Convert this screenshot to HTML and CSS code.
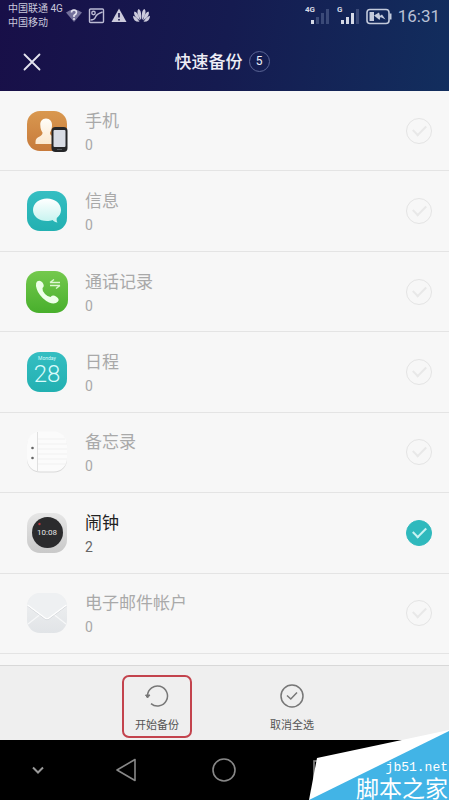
FILE: index.html
```html
<!DOCTYPE html>
<html lang="zh-CN">
<head>
<meta charset="utf-8">
<meta name="viewport" content="width=device-width, initial-scale=1">
<title>快速备份</title>
<link rel="stylesheet" href="styles.css">
</head>
<body>
<header class="top">
  <div class="status">
    <div class="carriers"><span>中国联通 4G</span><span>中国移动</span></div>
    <svg class="notices" width="84" height="18" viewBox="0 0 84 18" aria-hidden="true">
      <path d="M0 5.500Q8-0.500 16 5.500L8 15Z" fill="#74719b"/>
      <path d="M5.500 5.500Q5.500 3 8 3T10.500 5.500Q10.500 7 8 8.500V10" fill="none" stroke="#e6e5f0" stroke-width="1.600"/><circle cx="8" cy="12" r="1" fill="#e6e5f0"/>
      <g fill="none" stroke="#bcbbd4" stroke-width="1.400"><rect x="23.500" y="2" width="14" height="13.500" rx="1"/><circle cx="27.500" cy="6" r="1.700"/><path d="M24.500 13Q28.500 13 29.500 10T36.500 5"/></g>
      <path d="M53 1.500L60.500 15H45.500Z" fill="#cccbdc"/><path d="M53 6v4.500M53 12v1.600" stroke="#18144a" stroke-width="1.600"/>
      <g fill="#cccbdc"><path d="M75 13Q69.500 5 72.500 2Q76 3 75 13ZM76 13Q75 3 78.500 2Q81.500 5 76 13ZM74 13.500Q66.500 8.500 68.500 4.500Q72 5 74 13.500ZM77 13.500Q79 5 82.500 4.500Q84.500 8.500 77 13.500ZM73.500 14.800Q67 15 67 8.800Q70.500 10 73.500 14.800ZM77.500 14.800Q80.500 10 84 8.800Q84 15 77.500 14.800Z"/></g>
    </svg>
    <svg class="signals" width="88" height="22" viewBox="0 0 88 22" aria-hidden="true">
      <g fill="#d5d9e6" font-family="Roboto, sans-serif" font-size="8" font-weight="700"><text x="0" y="8">4G</text><text x="32" y="8">G</text></g>
      <g fill="#d5d9e6"><path d="M6 16h3v4H6zM36 16h3v4h-3zM41 13h3v7h-3zM46 9h3v11h-3z"/></g>
      <path d="M11 13h3v7h-3zM16 9h3v11h-3zM21 5h3v15h-3zM51 5h3v15h-3z" fill="#3b4a78"/>
      <rect x="62" y="5.500" width="22" height="14" rx="3" fill="none" stroke="#c3cadb" stroke-width="1.600"/><path d="M84.500 9.500h2v6h-2z" fill="#c3cadb"/>
      <path d="M64.500 8h4.500v9h-4.500zM69 11.500l5-3 1 3.200 2-1.200 3.500 5-5-2.500-1 3z" fill="#c3cadb"/>
    </svg>
    <time class="clock">16:31</time>
  </div>
  <div class="titlebar">
    <button class="close" type="button" aria-label="关闭"><svg width="18" height="18" viewBox="0 0 18 18"><path d="M1.500 1.500l15 15M16.500 1.500l-15 15" stroke="#e4e4ef" stroke-width="1.800" stroke-linecap="round"/></svg></button>
    <div class="heading"><h1>快速备份</h1><span class="badge">5</span></div>
  </div>
</header>
<main class="list">
  <label class="row">
    <svg class="icon" viewBox="0 0 42 42" aria-hidden="true"><defs><linearGradient id="or" x2="0" y2="1"><stop stop-color="#d9984f"/><stop offset="1" stop-color="#c77a3b"/></linearGradient><linearGradient id="cream" x2="0" y2="1"><stop stop-color="#fffdf8"/><stop offset="1" stop-color="#fbe8d0"/></linearGradient></defs>
      <rect x="1" y="1" width="40" height="40" rx="13" fill="url(#or)"/>
      <path d="M20 8.500C16 8.500 14 11.500 14.300 15C14.300 19 15.500 21 16.500 22.500C17 27 9.500 26 9.500 32V34H32V27C27 26 23.500 26 24 22.500C25.500 20 26 18 26 15C26 11.500 24 8.500 20 8.500Z" fill="url(#cream)"/>
      <rect x="25.500" y="17" width="16" height="25" rx="4" fill="#252628"/><rect x="27.500" y="20" width="12" height="17" rx="1" fill="#d8dce4"/><path d="M31 39.500h5" stroke="#55585b"/></svg>
    <span class="text"><span class="name">手机</span><span class="count">0</span></span>
    <input type="checkbox">
  </label>
  <label class="row">
    <svg class="icon" viewBox="0 0 42 42" aria-hidden="true"><defs><linearGradient id="te" x2="0" y2="1"><stop stop-color="#35bec2"/><stop offset="1" stop-color="#22b0b1"/></linearGradient><linearGradient id="bub" x2="0" y2="1"><stop stop-color="#fff"/><stop offset="1" stop-color="#c5f3ef"/></linearGradient></defs>
      <rect x="1" y="1" width="40" height="40" rx="13" fill="url(#te)"/>
      <path d="M21 8.500C13 8.500 7 13.500 7 20S13 31 21 31C23 31 25 30.700 26.500 30C28 31.500 29.500 32.500 31.500 32.500C30.500 31 30.500 29.500 30.800 28C33.500 26 35 23 35 20C35 13.500 29 8.500 21 8.500Z" fill="url(#bub)"/></svg>
    <span class="text"><span class="name">信息</span><span class="count">0</span></span>
    <input type="checkbox">
  </label>
  <label class="row">
    <svg class="icon" viewBox="0 0 42 42" aria-hidden="true"><defs><linearGradient id="gr" x2="0" y2="1"><stop stop-color="#74c94d"/><stop offset="1" stop-color="#48af2c"/></linearGradient></defs>
      <rect width="42" height="42" rx="13" fill="url(#gr)"/>
      <path d="M11 10.500Q14 8.500 16.500 11.500Q19 15 16.500 17Q16 20 19 23Q22 26 24.500 26Q27 23.500 30 25.500Q34 28 32 30.500Q29 34 23 31.500Q16 28 12 21Q8.500 13.500 11 10.500Z" fill="#edffe8"/>
      <path d="M24 11.500h10M24 11.500l4-3M24 14.500h10M34 14.500l-4 3" fill="none" stroke="#ddf7d3" stroke-width="1.400"/></svg>
    <span class="text"><span class="name">通话记录</span><span class="count">0</span></span>
    <input type="checkbox">
  </label>
  <label class="row">
    <svg class="icon" viewBox="0 0 42 42" aria-hidden="true"><rect x="1" y="1" width="40" height="40" rx="13" fill="url(#te)"/>
      <g fill="#d9fbfb" text-anchor="middle" font-family="Roboto, sans-serif"><text x="21" y="9" font-size="5">Monday</text><text x="21" y="31" font-size="24" font-weight="300">28</text></g></svg>
    <span class="text"><span class="name">日程</span><span class="count">0</span></span>
    <input type="checkbox">
  </label>
  <label class="row">
    <svg class="icon" viewBox="0 0 42 42" aria-hidden="true"><rect x="1" y="1.500" width="40" height="40" rx="13" fill="#d9d9d9"/><rect x="1" y="0.500" width="40" height="40" rx="13" fill="#fbfbfb"/>
      <path d="M12 8h27M12 13h29M12 18h29M12 23h29M12 28h29M12 33h28" stroke="#f1f1f1"/><path d="M11.500 1v39" stroke="#e0e0e0"/><circle cx="6.500" cy="17" r="1.300" fill="#666"/><circle cx="6.500" cy="27" r="1.300" fill="#666"/></svg>
    <span class="text"><span class="name">备忘录</span><span class="count">0</span></span>
    <input type="checkbox">
  </label>
  <label class="row selected">
    <svg class="icon" viewBox="0 0 42 42" aria-hidden="true"><defs><linearGradient id="si" x2="0" y2="1"><stop stop-color="#e6e6e6"/><stop offset="1" stop-color="#c9c9c9"/></linearGradient></defs>
      <rect x="1" y="1" width="40" height="40" rx="13" fill="url(#si)"/><circle cx="21.500" cy="20.500" r="15.500" fill="#2b2b2d"/><circle cx="13.500" cy="12" r="1.200" fill="#b5343c"/>
      <text x="21" y="23" font-size="8" text-anchor="middle" fill="#e6e6e6" font-family="Roboto, sans-serif">10:08</text></svg>
    <span class="text"><span class="name">闹钟</span><span class="count">2</span></span>
    <input type="checkbox" checked>
  </label>
  <label class="row">
    <svg class="icon" viewBox="0 0 42 42" aria-hidden="true"><defs><linearGradient id="ma" x2="0" y2="1"><stop stop-color="#f0f1f2"/><stop offset="1" stop-color="#e1e4e7"/></linearGradient></defs>
      <rect x="1" y="1" width="40" height="40" rx="13" fill="url(#ma)"/><path d="M2 32L16 21M40 32L26 21" stroke="#f7f8f9" stroke-width="1.200"/><path d="M1.500 13L19 26Q21 27.500 23 26L40.500 13Q38 1 28 1H14Q4 1 1.500 13Z" fill="#eef0f2"/><path d="M1.500 14L19 27Q21 28.500 23 27L40.500 14" fill="none" stroke="#d3d6da"/><path d="M1.500 13L19 26Q21 27.500 23 26L40.500 13" fill="none" stroke="#fff" stroke-width="1.200"/></svg>
    <span class="text"><span class="name">电子邮件帐户</span><span class="count">0</span></span>
    <input type="checkbox">
  </label>
</main>
<footer class="actions">
  <button class="action marked" type="button">
    <svg width="24" height="24" viewBox="0 0 24 24" fill="none" stroke="#777" stroke-width="1.500"><path d="M2.500 11.500A10 10 0 1 1 6 19.600"/><path d="M0.500 11h4.500L2.500 14Z" fill="#777" stroke-width="1"/></svg>
    开始备份</button>
  <button class="action" type="button">
    <svg width="24" height="24" viewBox="0 0 24 24" fill="none" stroke="#777" stroke-width="1.500"><circle cx="12" cy="12" r="11"/><path d="M7 11.500l3.800 3.500L17 8.500"/></svg>
    取消全选</button>
</footer>
<nav class="keys">
  <button type="button" aria-label="收起"><svg width="12" height="8" viewBox="0 0 12 8"><path d="M1 1.500l5 5 5-5" fill="none" stroke="#999" stroke-width="2"/></svg></button>
  <button type="button" aria-label="返回"><svg width="22" height="24" viewBox="0 0 22 24"><path d="M20 1.500v21L2 12Z" fill="none" stroke="#888" stroke-width="1.600" stroke-linejoin="round"/></svg></button>
  <button type="button" aria-label="主屏幕"><svg width="24" height="24" viewBox="0 0 24 24"><circle cx="12" cy="12" r="11" fill="none" stroke="#888" stroke-width="1.600"/></svg></button>
  <button type="button" aria-label="最近任务"><svg width="20" height="20" viewBox="0 0 20 20"><rect x="1" y="1" width="18" height="18" fill="none" stroke="#888" stroke-width="1.600"/></svg></button>
</nav>
<aside class="watermark">
  <svg width="140" height="70" viewBox="0 0 140 70" aria-hidden="true"><path d="M0 70L8 28L140 0V70Z" fill="#fff"/><path d="M0 70L140 1V70Z" fill="#42b4e6"/></svg>
  <div class="site"><span class="domain">jb51.net</span><span class="brand">脚本之家</span></div>
</aside>
</body>
</html>
```
FILE: styles.css
```css
* {
  box-sizing: border-box;
}

body {
  position: relative;
  display: flex;
  flex-direction: column;
  min-height: 100vh;
  margin: 0;
  background: #f7f7f7;
  font-family: Roboto, "Noto Sans CJK SC", sans-serif;
}

button {
  padding: 0;
  border: 0;
  background: none;
  font: inherit;
  cursor: pointer;
}

svg {
  display: block;
  flex: none;
}

.top {
  height: 91px;
  background: linear-gradient(100deg, #180f48, #151b50 50%, #122e5e);
  color: #eeeef6;
}

.status {
  display: flex;
  align-items: center;
  height: 31px;
  padding: 0 9px 0 8px;
}

.carriers {
  display: flex;
  flex-direction: column;
  width: 58px;
  color: #c9c8dc;
  font-size: 10px;
  line-height: 14px;
  white-space: nowrap;
}

.signals {
  margin-left: auto;
  margin-bottom: 2px;
}

.clock {
  margin-left: 5px;
  color: #b9c1d5;
  font-size: 17px;
}

.titlebar {
  display: grid;
  grid-template-columns: 1fr auto 1fr;
  align-items: center;
  height: 61px;
  padding-right: 5px;
}

.close {
  justify-self: start;
  padding: 12px 23px;
}

.heading {
  display: flex;
  align-items: center;
  gap: 6px;
}

h1 {
  margin: 0;
  font-size: 17px;
  font-weight: 500;
  line-height: 24px;
}

.badge {
  width: 21px;
  height: 21px;
  border: 1px solid #5b6595;
  border-radius: 50%;
  font-size: 12px;
  line-height: 19px;
  text-align: center;
}

.list {
  display: grid;
  flex: 1;
  grid-auto-rows: 1fr;
  padding-bottom: 11px;
}

.row {
  display: flex;
  align-items: center;
  padding: 0 17px 0 26px;
  border-bottom: 1px solid #e4e4e4;
}

.icon {
  width: 42px;
  height: 42px;
}

.text {
  display: flex;
  flex: 1;
  flex-direction: column;
  margin-left: 17px;
  padding-top: 4px;
  color: #a9a9a9;
  line-height: 24px;
}

.name {
  font-size: 17px;
}

.count {
  font-size: 14px;
}

.selected .name {
  color: #222;
}

.selected .count {
  color: #666;
}

.row input {
  display: grid;
  place-items: center;
  width: 26px;
  height: 26px;
  margin: 0;
  border: 1px solid #e4e4e4;
  border-radius: 50%;
  appearance: none;
}

.row input::after {
  width: 11px;
  height: 6px;
  margin-bottom: 4px;
  border: solid #e8e8e8;
  border-width: 0 0 2px 2px;
  content: "";
  transform: rotate(-45deg);
}

.row input:checked {
  border-color: #2fb9bd;
  background: #2fb9bd;
}

.row input:checked::after {
  border-color: #c8f3f2;
}

.actions {
  display: flex;
  justify-content: center;
  gap: 65px;
  height: 75px;
  padding-top: 9px;
  border-top: 1px solid #d8d8d8;
  background: #efefef;
}

.action {
  display: flex;
  flex-direction: column;
  align-items: center;
  gap: 9px;
  width: 70px;
  height: 63px;
  padding-top: 7px;
  border: 2px solid transparent;
  border-radius: 7px;
  color: #555;
  font-size: 11px;
  line-height: 18px;
}

.marked {
  border-color: #c3434d;
}

.keys {
  display: grid;
  grid-template-columns: 17% 22% 22% 22%;
  height: 60px;
  background: #000;
}

.keys button {
  display: grid;
  place-items: center;
}

.watermark {
  position: absolute;
  right: 0;
  bottom: 0;
}

.site {
  position: absolute;
  right: 0;
  bottom: 0;
  display: flex;
  flex-direction: column;
  align-items: flex-end;
  color: #fff;
  white-space: nowrap;
}

.domain {
  padding-right: 1px;
  font-family: "Liberation Mono", monospace;
  font-size: 13px;
  line-height: 14px;
}

.brand {
  padding-right: 1px;
  font-family: "Noto Sans CJK SC", sans-serif;
  font-size: 23px;
  line-height: 25px;
}
```
